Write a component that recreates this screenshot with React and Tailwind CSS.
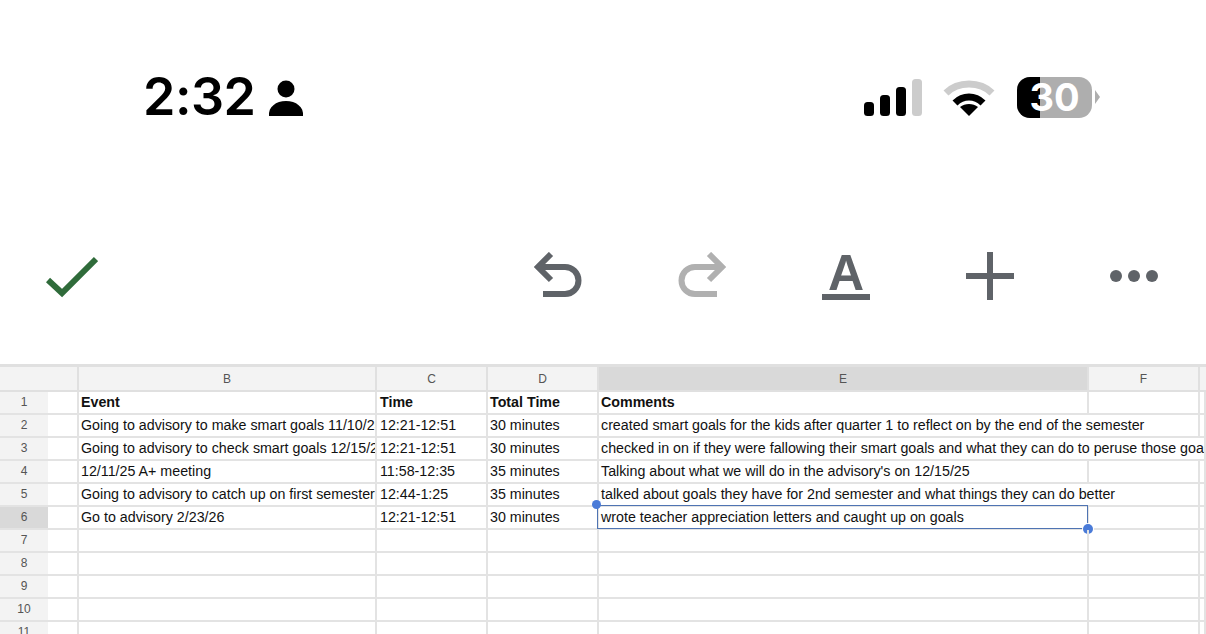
import React from 'react';

const rows = [
  { b: 'Event', c: 'Time', d: 'Total Time', e: 'Comments', bold: true },
  { b: 'Going to advisory to make smart goals 11/10/25', c: '12:21-12:51', d: '30 minutes', e: 'created smart goals for the kids after quarter 1 to reflect on by the end of the semester', span: 2 },
  { b: 'Going to advisory to check smart goals 12/15/25', c: '12:21-12:51', d: '30 minutes', e: 'checked in on if they were fallowing their smart goals and what they can do to peruse those goals', span: 3 },
  { b: '12/11/25 A+ meeting', c: '11:58-12:35', d: '35 minutes', e: "Talking about what we will do in the advisory's on 12/15/25" },
  { b: 'Going to advisory to catch up on first semester', c: '12:44-1:25', d: '35 minutes', e: 'talked about goals they have for 2nd semester and what things they can do better', span: 2 },
  { b: 'Go to advisory 2/23/26', c: '12:21-12:51', d: '30 minutes', e: 'wrote teacher appreciation letters and caught up on goals', selected: true },
  {},
  {},
  {},
  {},
  {},
];

const cellClass = 'h-[23px] border-r-2 border-b-2 border-[#e3e3e3] pl-[2px] overflow-hidden whitespace-nowrap leading-[21px] text-[14.25px] text-[#111]';

const ColHead = ({ label, active }) => (
  <div className={`h-[25px] flex items-center justify-center border-r-2 border-b-2 border-[#e0e0e0] text-[12px] text-[#555] ${active ? 'bg-[#d9d9d9]' : 'bg-[#f3f3f3]'}`}>
    {label}
  </div>
);

const Row = ({ row, index }) => (
  <>
    <div className={`h-[23px] pb-[2px] border-b-2 border-[#e3e3e3] flex items-center justify-center text-[12px] text-[#555] ${row.selected ? 'bg-[#d9d9d9]' : 'bg-[#f3f3f3]'}`}>
      {index + 1}
    </div>
    <div className="h-[23px] border-r-2 border-b-2 border-[#e3e3e3] bg-white" />
    <div className={`${cellClass} ${row.bold ? 'font-bold' : ''}`}>{row.b}</div>
    <div className={`${cellClass} pl-[3px] ${row.bold ? 'font-bold' : ''}`}>{row.c}</div>
    <div className={`${cellClass} ${row.bold ? 'font-bold' : ''}`}>{row.d}</div>
    {row.span === 3 ? (
      <div className={`${cellClass} col-span-3 border-r-0`}>{row.e}</div>
    ) : (
      <>
        {row.span === 2 ? (
          <div className={`${cellClass} col-span-2`}>{row.e}</div>
        ) : (
          <>
            <div className={`${cellClass} relative overflow-visible ${row.bold ? 'font-bold' : ''}`}>
              {row.e}
              {row.selected && (
                <>
                  <div className="absolute left-[-2px] right-[-1px] top-[-2px] bottom-[-1px] border border-[#4f74b3]" />
                  <div className="absolute left-[-7px] top-[-7px] w-[9px] h-[9px] rounded-full bg-[#4a7bd8]" />
                  <div className="absolute right-[-6px] bottom-[-6px] w-[10px] h-[10px] rounded-full bg-[#4a7bd8] ring-1 ring-white" />
                </>
              )}
            </div>
            <div className={cellClass} />
          </>
        )}
      </>
    )}
    {row.span !== 3 && <div className={`${cellClass} border-r-0`} />}
  </>
);

const StatusBar = () => (
  <div className="h-[196px] pt-[72px] pl-[143px] pr-[106px] flex justify-between items-start">
    <div className="flex items-center h-[50px] gap-[13px]">
      <span className="text-[52px] font-semibold text-black leading-none font-['Inter',sans-serif] tracking-[-0.5px]">2:32</span>
      <svg width="36" height="38" viewBox="0 0 36 38" className="mt-[1px]">
        <circle cx="18" cy="10" r="8.5" fill="#000" />
        <path d="M1 37c-1-9 7-15 17-15s18 6 17 15z" fill="#000" />
      </svg>
    </div>
    <div className="flex items-center h-[50px]">
      <svg width="58" height="37" viewBox="0 0 58 37">
        <rect x="0" y="23" width="10" height="14" rx="3.5" fill="#000" />
        <rect x="16" y="16" width="10" height="21" rx="3.5" fill="#000" />
        <rect x="32" y="8" width="10" height="29" rx="3.5" fill="#000" />
        <rect x="48" y="0" width="10" height="37" rx="3.5" fill="#ccc" />
      </svg>
      <svg width="52" height="38" viewBox="0 0 52 38" className="ml-[21px]">
        <path d="M3 15 C 15 3, 37 3, 49 15" fill="none" stroke="#ccc" strokeWidth="7" />
        <path d="M12 25 C 20 17, 32 17, 40 25" fill="none" stroke="#000" strokeWidth="7" />
        <path d="M17 29 C 22 25, 30 25, 35 29 L 26 38 Z" fill="#000" />
      </svg>
      <div className="relative ml-[22px] flex w-[75px] h-[41px] rounded-[13px] overflow-hidden bg-[#aeaeae]">
        <div className="w-[23px] bg-black" />
        <span className="absolute inset-0 flex items-center justify-center text-white font-bold text-[38px] leading-none font-['Inter',sans-serif]">30</span>
      </div>
      <div className="ml-[3px] w-0 h-0 border-y-[7px] border-y-transparent border-l-[5px] border-l-[#aeaeae]" />
    </div>
  </div>
);

const Toolbar = () => (
  <div className="h-[168px] pt-[56px] pl-[46px] pr-[48px] flex justify-between items-start">
    <svg width="52" height="48" viewBox="0 0 52 48">
      <path d="M2 28 L16 41 L50 7" fill="none" stroke="#2f6b3a" strokeWidth="6" />
    </svg>
    <div className="flex gap-[96px]">
      <svg width="48" height="48" viewBox="0 0 48 48">
        <path d="M17 2 L4 15 L17 28 M4 15 H31 A13.5 13.5 0 0 1 31 42 H9" fill="none" stroke="#5f6368" strokeWidth="6" />
      </svg>
      <svg width="48" height="48" viewBox="0 0 48 48">
        <path d="M31 2 L44 15 L31 28 M44 15 H17 A13.5 13.5 0 0 0 17 42 H39" fill="none" stroke="#b0b0b0" strokeWidth="6" />
      </svg>
      <div className="w-[48px] h-[48px] flex flex-col items-center">
        <span className="h-[42px] text-[50px] leading-[42px] font-bold text-[#5f6368] font-['Liberation_Sans',sans-serif]">A</span>
        <div className="w-[48px] h-[6px] bg-[#5f6368]" />
      </div>
      <svg width="48" height="48" viewBox="0 0 48 48">
        <path d="M24 0 V48 M0 24 H48" fill="none" stroke="#5f6368" strokeWidth="6" />
      </svg>
      <svg width="48" height="48" viewBox="0 0 48 48">
        <circle cx="6" cy="24" r="6" fill="#5f6368" />
        <circle cx="24" cy="24" r="6" fill="#5f6368" />
        <circle cx="42" cy="24" r="6" fill="#5f6368" />
      </svg>
    </div>
  </div>
);

export default function App() {
  return (
    <div className="w-[1206px] h-[634px] overflow-hidden bg-white font-['Liberation_Sans',Arial,sans-serif]">
      <StatusBar />
      <Toolbar />
      <div className="border-t-[3px] border-[#e0e0e0] grid grid-cols-[48px_31px_298px_111px_111px_490px_111px_6px]">
        <div className="h-[25px] border-b-2 border-[#e0e0e0] bg-[#f3f3f3]" />
        <div className="h-[25px] border-r-2 border-b-2 border-[#e0e0e0] bg-[#f3f3f3]" />
        <ColHead label="B" />
        <ColHead label="C" />
        <ColHead label="D" />
        <ColHead label="E" active />
        <ColHead label="F" />
        <div className="h-[25px] border-b-2 border-[#e0e0e0] bg-[#f3f3f3]" />
        {rows.map((row, i) => (
          <Row key={i} row={row} index={i} />
        ))}
      </div>
    </div>
  );
}
